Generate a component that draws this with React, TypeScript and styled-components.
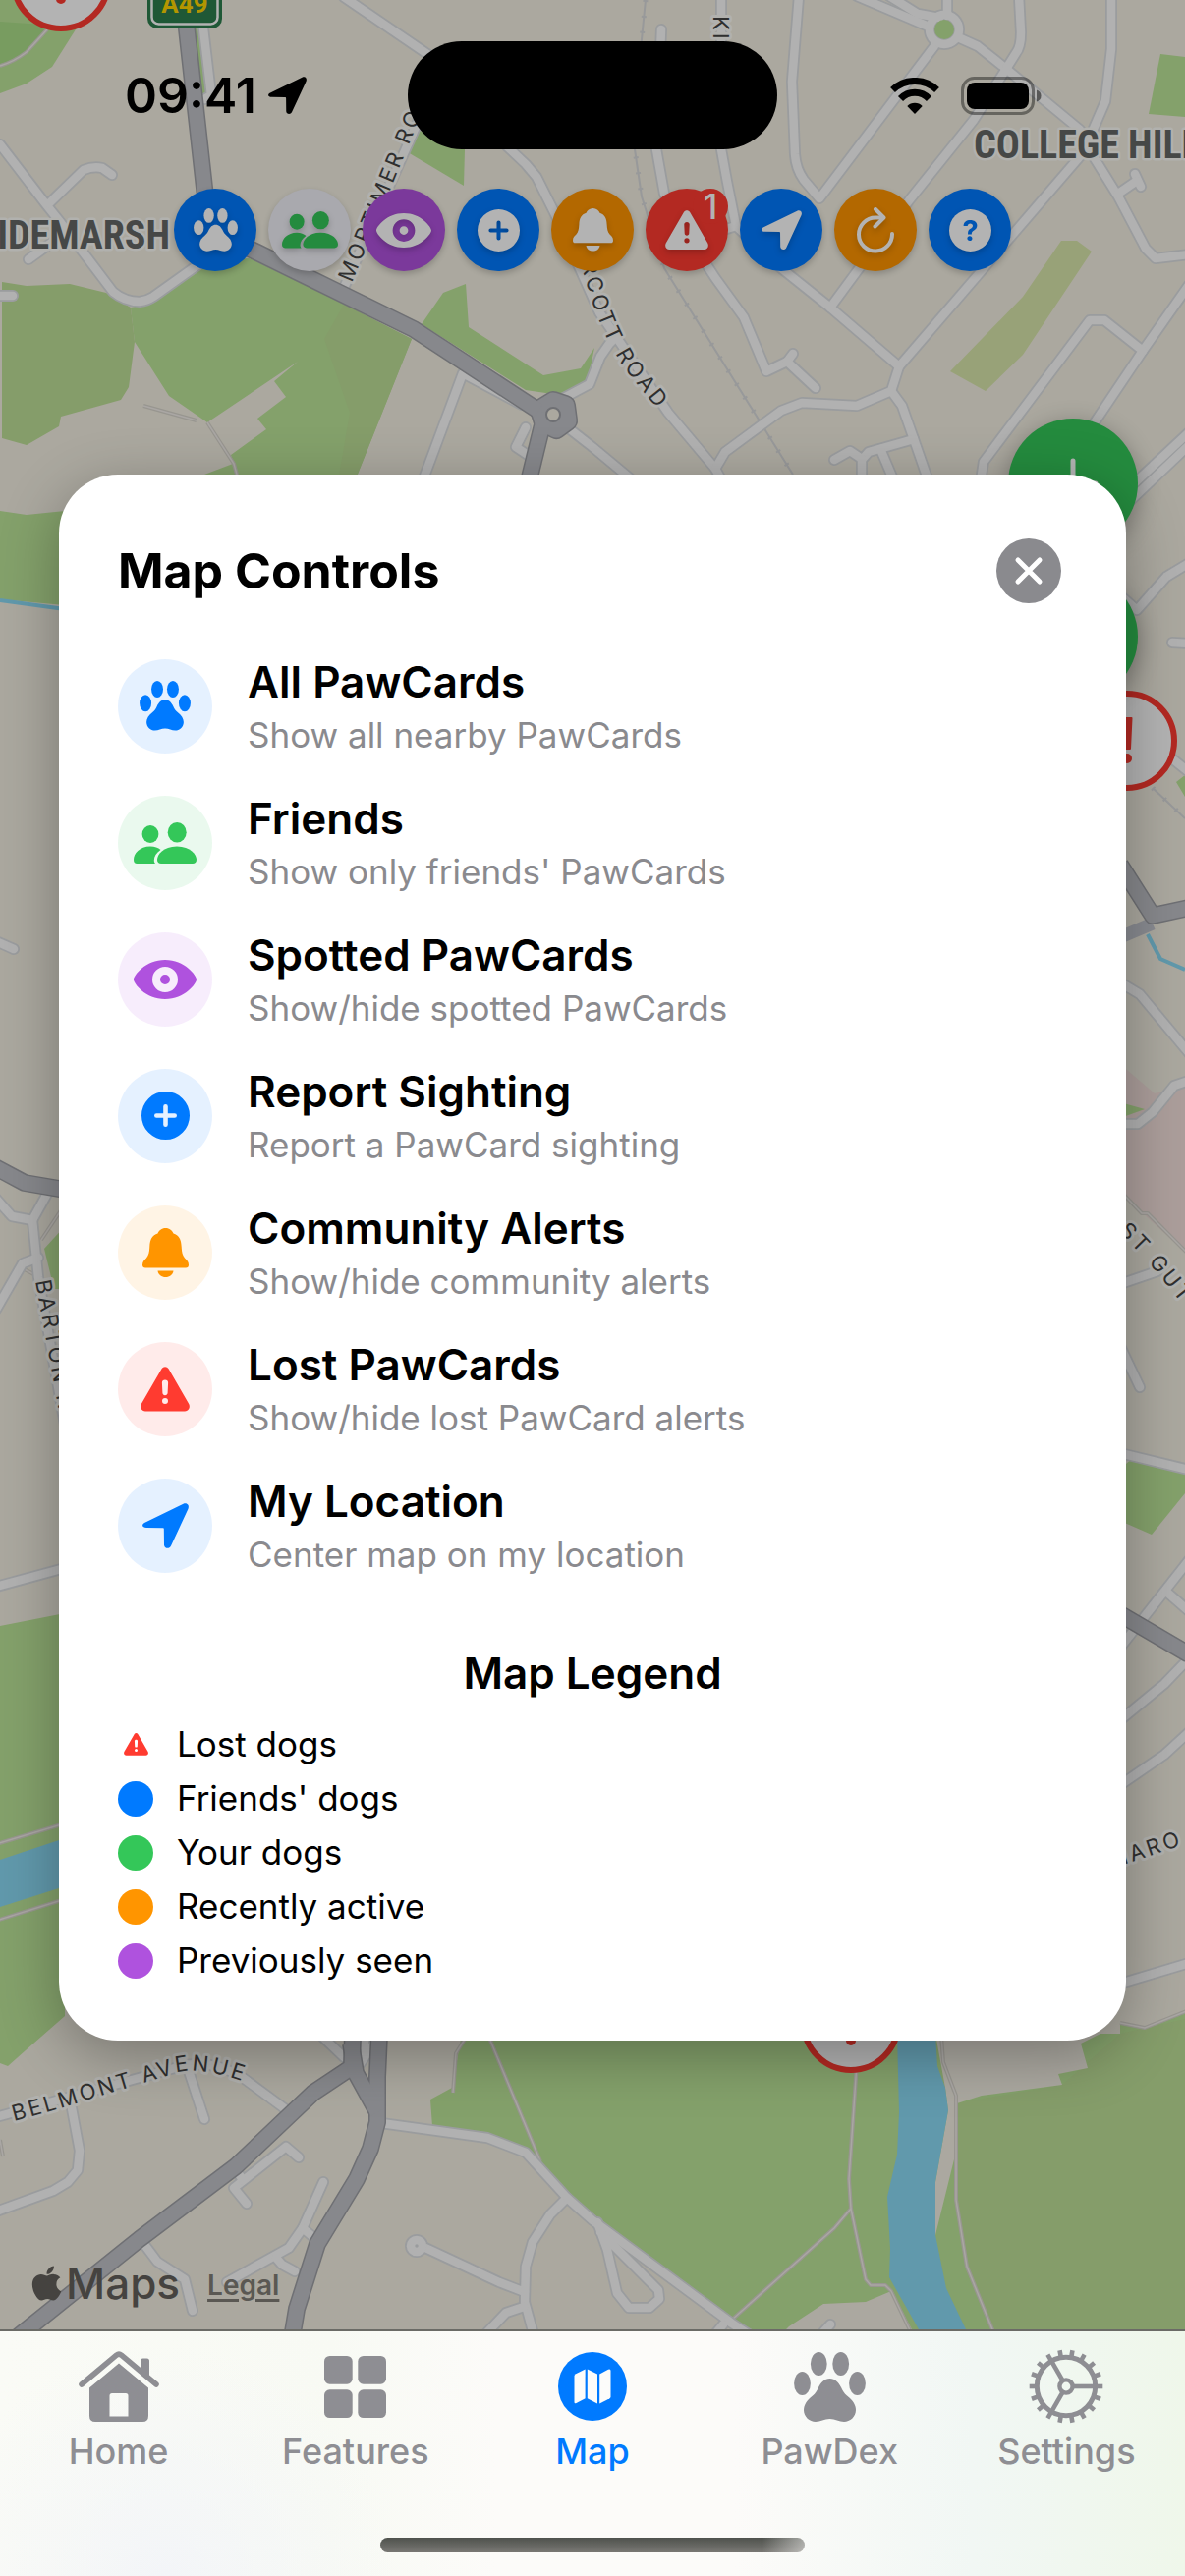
import React from "react";
import styled, { createGlobalStyle } from "styled-components";
import { FaApple } from "react-icons/fa";

const GlobalStyle = createGlobalStyle`
  *, *::before, *::after { box-sizing: border-box; }
  body { margin: 0; background: #aba89f; }
  h1, h2, h3, p, ul { margin: 0; padding: 0; }
  ul { list-style: none; }
  button { border: 0; padding: 0; font: inherit; cursor: pointer; }
`;

const color = {
  blue: "#007aff",
  green: "#34c759",
  purple: "#af52de",
  orange: "#ff9500",
  red: "#ff3b30",
  gray: "#8a8a8e",
  dimBlue: "#0055b3",
  dimGreen: "#248b3e",
  dimPurple: "#7b399b",
  dimOrange: "#b36800",
  dimRed: "#b32922",
  dimGray: "#a9a9ae",
  dimWhite: "#b3b3b3",
};

/* ---------- icons ---------- */

type IconName =
  | "paw" | "friends" | "eye" | "plus" | "bell" | "alert" | "arrow"
  | "refresh" | "help" | "home" | "grid" | "map" | "gear";

const iconBox: Record<IconName, [number, number]> = {
  paw: [73, 71],
  friends: [64, 42],
  eye: [64, 40],
  plus: [49, 49],
  bell: [47, 50],
  alert: [50, 46],
  arrow: [47, 46],
  refresh: [38, 46],
  help: [43, 43],
  home: [82, 73],
  grid: [63, 63],
  map: [70, 70],
  gear: [74, 74],
};

const iconArt: Record<IconName, React.ReactNode> = {
  paw: (
    <>
      <ellipse cx="25.3" cy="12" rx="8.4" ry="12" />
      <ellipse cx="47.7" cy="12" rx="8.4" ry="12" />
      <ellipse cx="8.5" cy="32" rx="8.4" ry="12" />
      <ellipse cx="64.5" cy="32" rx="8.4" ry="12" />
      <path d="M36.5 27C42 27 45.5 31 48 36C50 40 51 42 54 44.500C60 49 63 54 63 59C63 66 57 71 51 71C46 71 42 68 36.500 68C31 68 27 71 22 71C16 71 10 66 10 59C10 54 13 49 19 44.500C22 42 23 40 25 36C27.500 31 31 27 36.500 27Z" />
    </>
  ),
  friends: (
    <>
      <ellipse cx="17" cy="12" rx="8.4" ry="9" />
      <ellipse cx="44.200" cy="10.300" rx="9.500" ry="10.300" />
      <path d="M28 42C25.500 42 24 40.500 24 38C24 33 30 24.500 44 24.500C58 24.500 64 33 64 38C64 40.500 62.500 42 60 42Z" />
      <path d="M3.500 42C1 42 0 40.500 0 38C0 32 6 24.500 17 24.500C21.500 24.500 25 26 27.500 28C23 31 20.800 35 20.800 38.500C20.800 40 21.200 41 22 42Z" />
    </>
  ),
  eye: (
    <path
      fillRule="evenodd"
      d="M0 20C0 16 12 0 32 0S64 16 64 20S52 40 32 40S0 24 0 20ZM32 7A13 13 0 1 0 32 33A13 13 0 1 0 32 7ZM32 15A5 5 0 1 1 32 25A5 5 0 1 1 32 15Z"
    />
  ),
  plus: (
    <path
      fillRule="evenodd"
      d="M24.500 0A24.500 24.500 0 1 0 24.500 49A24.500 24.500 0 1 0 24.500 0ZM22.200 15.300A2.300 2.300 0 0 1 26.800 15.300V22.200H33.700A2.300 2.300 0 0 1 33.700 26.800H26.800V33.700A2.300 2.300 0 0 1 22.200 33.700V26.800H15.300A2.300 2.300 0 0 1 15.300 22.200H22.200Z"
    />
  ),
  bell: (
    <>
      <path d="M3 40.500C1 40.500 0 39.500 0 37.500C0 34 2 32.500 4 30.500C6.500 27.500 7 24 7.300 19C7.600 11 10 7.500 15.500 5.500C16.500 2.500 19.500 0 23.500 0S30.500 2.500 31.500 5.500C37 7.500 39.400 11 39.700 19C40 24 40.500 27.500 43 30.500C45 32.500 47 34 47 37.500C47 39.500 46 40.500 44 40.500Z" />
      <path d="M15.500 43.500H31.500C31 47.500 27.500 50 23.500 50S16 47.500 15.500 43.500Z" />
    </>
  ),
  alert: (
    <path
      fillRule="evenodd"
      d="M21.500 2.200C23 -.5 27 -.5 28.600 2.200L49.200 38C51 41.500 48.800 45.500 45 45.500H5C1.200 45.500 -1 41.500 .8 38ZM25 13.500C23.100 13.500 21.800 14.800 21.900 16.600L22.400 26.800C22.500 28.300 23.500 29.200 25 29.200S27.500 28.300 27.600 26.800L28.100 16.600C28.200 14.800 26.900 13.500 25 13.500ZM25 32A3 3 0 1 0 25 38A3 3 0 1 0 25 32Z"
    />
  ),
  arrow: (
    <path d="M2.500 19.800L41.500 .8C45 -.8 48 2 46.500 5.700L29 43.500C27.500 47 22.300 46.600 22 42.500L21.800 26.300C21.800 25.600 21.400 25.200 20.800 25.200L4 25C-.5 24.900 -1.200 21.600 2.500 19.800Z" />
  ),
  refresh: (
    <g fill="none" stroke="currentColor" strokeWidth="4" strokeLinecap="round" strokeLinejoin="round">
      <path d="M36 27A17 17 0 1 1 19 10.500H27" />
      <path d="M19 2L27.500 10.500L18.500 19.500" />
    </g>
  ),
  help: (
    <>
      <circle cx="21.500" cy="21.500" r="21.500" />
      <text x="21.500" y="32" textAnchor="middle" fontFamily="Inter, sans-serif" fontWeight="700" fontSize="29" fill={color.dimBlue}>?</text>
    </>
  ),
  home: (
    <>
      <path d="M3 34L38.500 4.200Q41 2.200 43.500 4.200L79 34" fill="none" stroke="currentColor" strokeWidth="5.600" strokeLinecap="round" />
      <path d="M63 21V10Q63 7.500 65.500 7.500H69.500Q72 7.500 72 10V29Z" />
      <path fillRule="evenodd" d="M41 12.500L71 37.500V66Q71 72 65 72H17Q11 72 11 66V37.500ZM34 43Q31.500 43 31.500 45.500V66.500H50.500V45.500Q50.500 43 48 43Z" />
    </>
  ),
  grid: (
    <>
      <rect width="28.700" height="28.700" rx="5.500" />
      <rect x="34.300" width="28.700" height="28.700" rx="5.500" />
      <rect y="34.300" width="28.700" height="28.700" rx="5.500" />
      <rect x="34.300" y="34.300" width="28.700" height="28.700" rx="5.500" />
    </>
  ),
  map: (
    <>
      <circle cx="35" cy="35" r="35" />
      <g fill="#fcfcfa">
        <path d="M16.500 24.500Q16.500 23 18 22.200L27.600 17.500V47.300L18.500 52Q16.500 52.700 16.500 51Z" />
        <path d="M29.800 17.500L40 22.600V52.500L29.800 47.300Z" />
        <path d="M42.200 22.600L51 17.800Q53.500 16.800 53.500 19V45.500Q53.500 46.600 52.500 47.200L42.200 52.500Z" />
      </g>
    </>
  ),
  gear: (
    <g fill="none" stroke="currentColor">
      <circle cx="37" cy="37" r="29.700" strokeWidth="5" />
      {Array.from({ length: 18 }, (_, i) => (
        <path key={i} d="M68 37H72" strokeWidth="4.600" strokeLinecap="square" transform={`rotate(${i * 20} 37 37)`} />
      ))}
      <circle cx="37" cy="37" r="6.600" strokeWidth="4.400" />
      {[0, 120, 240].map((a) => (
        <path key={a} d="M45 37H66" strokeWidth="4.600" transform={`rotate(${a} 37 37)`} />
      ))}
    </g>
  ),
};

const IconSvg = styled.svg<{ $w: number }>`
  display: block;
  width: ${(p) => p.$w}px;
  height: auto;
  fill: currentColor;
  overflow: visible;
`;

function Icon({ name, width }: { name: IconName; width: number }) {
  const [w, h] = iconBox[name];
  return (
    <IconSvg $w={width} viewBox={`0 0 ${w} ${h}`} aria-hidden="true">
      {iconArt[name]}
    </IconSvg>
  );
}

/* ---------- layout ---------- */

const Screen = styled.div`
  display: flex;
  flex-direction: column;
  min-height: 100vh;
  font-family: Inter, "Liberation Sans", sans-serif;
  color: #000;
`;

const MapArea = styled.main`
  position: relative;
  flex: 1;
  display: flex;
  flex-direction: column;
  overflow: hidden;
  border-bottom: 2px solid #6b6b66;
`;

const MapSvg = styled.svg`
  position: absolute;
  inset: 0;
  width: 100%;
  height: 100%;
`;

const StatusBar = styled.header`
  position: relative;
  display: grid;
  grid-template-columns: 1fr 376px 1fr;
  align-items: center;
  height: 192px;
  padding: 42px 0 40px;
`;

const StatusLeft = styled.div`
  display: flex;
  align-items: center;
  justify-content: center;
  gap: 12px;
  padding-left: 24px;
`;

const Clock = styled.span`
  font-size: 50px;
  font-weight: 600;
  line-height: 60px;
`;

const Island = styled.div`
  height: 110px;
  border-radius: 55px;
  background: #000;
`;

const StatusRight = styled.div`
  display: flex;
  align-items: center;
  justify-content: center;
  gap: 22px;
  padding-right: 32px;
`;

const Toolbar = styled.nav`
  position: relative;
  display: flex;
  justify-content: center;
  gap: 12px;
`;

const ToolButton = styled.button<{ $bg: string; $fg?: string }>`
  position: relative;
  display: grid;
  place-items: center;
  width: 84px;
  height: 84px;
  border-radius: 50%;
  background: ${(p) => p.$bg};
  color: ${(p) => p.$fg ?? color.dimWhite};
  box-shadow: 0 3px 6px rgba(0, 0, 0, 0.2);
  svg { filter: drop-shadow(0 3px 3px rgba(0, 0, 0, 0.2)); }
`;

const Badge = styled.span`
  position: absolute;
  top: 0;
  right: 0;
  width: 36px;
  height: 36px;
  border-radius: 50%;
  background: ${color.dimRed};
  font-size: 35px;
  font-weight: 500;
  line-height: 36px;
  text-align: center;
`;

const FloatingActions = styled.div`
  position: absolute;
  top: 426px;
  right: 48px;
  display: grid;
  gap: 24px;
`;

const FloatingButton = styled.button`
  display: grid;
  place-items: center;
  width: 132px;
  height: 132px;
  border-radius: 50%;
  background: ${color.dimGreen};
  color: ${color.dimWhite};
  box-shadow: 0 6px 24px rgba(0, 0, 0, 0.3);
`;

const Dialog = styled.section`
  position: relative;
  margin: 207px 60px auto;
  padding: 60px;
  border-radius: 60px;
  background: #fff;
  box-shadow: 0 15px 60px rgba(0, 0, 0, 0.3);
`;

const DialogHeader = styled.div`
  display: flex;
  align-items: center;
  justify-content: space-between;
  margin-bottom: 48px;
`;

const DialogTitle = styled.h1`
  font-size: 50px;
  font-weight: 700;
  line-height: 60px;
`;

const CloseButton = styled.button`
  display: grid;
  place-items: center;
  width: 78px;
  height: 76px;
  background: none;
`;

const ControlList = styled.ul`
  display: grid;
  gap: 36px;
`;

const ControlRow = styled.li`
  display: flex;
  align-items: center;
  gap: 36px;
  height: 103px;
`;

const ControlIcon = styled.span<{ $color: string }>`
  display: grid;
  place-items: center;
  width: 96px;
  height: 96px;
  border-radius: 50%;
  color: ${(p) => p.$color};
  background: ${(p) => p.$color}1a;
`;

const ControlText = styled.div`
  display: grid;
  gap: 6px;
`;

const ControlName = styled.h3`
  font-size: 44px;
  font-weight: 600;
  line-height: 54px;
`;

const ControlHint = styled.p`
  font-size: 35px;
  line-height: 43px;
  color: ${color.gray};
`;

const LegendTitle = styled.h2`
  margin: 72px 0 24px;
  font-size: 44px;
  font-weight: 600;
  line-height: 54px;
  text-align: center;
`;

const LegendList = styled.ul`
  display: grid;
  gap: 12px;
`;

const LegendRow = styled.li`
  display: flex;
  align-items: center;
  gap: 24px;
  font-size: 35px;
  line-height: 43px;
`;

const LegendMark = styled.span<{ $color: string; $dot: boolean }>`
  display: grid;
  place-items: center;
  width: 36px;
  height: 36px;
  border-radius: 50%;
  color: ${(p) => p.$color};
  background: ${(p) => (p.$dot ? p.$color : "transparent")};
`;

const MapFooter = styled.footer`
  position: relative;
  display: flex;
  align-items: flex-end;
  gap: 28px;
  padding: 0 32px 20px;
  color: #454340;
`;

const MapsBrand = styled.span`
  display: flex;
  align-items: center;
  gap: 4px;
  font-size: 44px;
  font-weight: 500;
  line-height: 54px;
`;

const AppleMark = styled(FaApple)`
  width: 31px;
  height: 40px;
`;

const LegalLink = styled.a`
  font-size: 28px;
  font-weight: 600;
  line-height: 50px;
  color: #5a5853;
  text-underline-offset: 4px;
  text-decoration-thickness: 3px;
`;

const TabBar = styled.nav`
  display: flex;
  flex-direction: column;
  align-items: center;
  height: 249px;
  background:
    radial-gradient(circle at 14% 100%, #f3f5f8, transparent 22%),
    linear-gradient(90deg, #fafbf6 0%, #f8faf4 28%, #fcfbf9 42%, #fcfbf9 62%, #f1f7f4 82%, #eff7ea 100%);
`;

const TabRow = styled.div`
  display: grid;
  grid-template-columns: repeat(5, 1fr);
  width: 100%;
  padding-top: 18px;
`;

const Tab = styled.button<{ $active?: boolean }>`
  display: grid;
  grid-template-rows: 76px 44px;
  gap: 6px;
  place-items: center;
  background: none;
  color: ${(p) => (p.$active ? color.blue : "#8e8e93")};
  font-size: 36px;
  font-weight: 500;
  line-height: 44px;
`;

const HomeIndicator = styled.div`
  width: 432px;
  height: 15px;
  margin: auto 0 24px;
  border-radius: 8px;
  background: linear-gradient(90deg, transparent 90%, rgba(252, 251, 249, 0.5)), linear-gradient(#4f524d, #797874);
`;

/* ---------- map drawing ---------- */

const streets = [
  "M0 147L46 207L62 227L115 297Q127 307 142 307Q150 306 156 302L205 267",
  "M50 207L85 173Q95 169 104 171L114 178",
  "M29 264L62 240L66 232",
  "M-5 301H13",
  "M207 29L215 97L208 101",
  "M350 -3L435 55L517 150L535 167L546 180L567 222L610 318L680 420L728 477L735 490",
  "M427 120L350 293",
  "M430 490L471 380L531 412",
  "M540 465L525 455L535 435",
  "M570 407L600 391L611 363L620 350L630 340",
  "M580 437L603 455L645 490",
  "M872 -4L945 27",
  "M905 -4L934 14L956 18",
  "M964 -4V16",
  "M975 38L995 47L1024 70L1099 132L1107 150L1138 200L1166 253L1176 263L1210 259",
  "M1037 -4L1039 33Q1039 48 1034 54L1024 70L991 122L926 203L845 313",
  "M1131 -4V50L1125 103L1109 140",
  "M951 47L834 202L818 183Q810 172 809 157L806 83L813 -4",
  "M1107 150L915 373L907 398L872 413L816 410L795 418L738 460L728 477",
  "M907 398L918 413L930 447L945 490",
  "M930 447L884 460L877 468V490",
  "M849 468L865 459L877 467",
  "M896 457L910 490",
  "M749 230L795 273L845 313L915 373",
  "M673 30L668 152L676 197L700 240L728 283L757 323L780 378L801 368L807 360",
  "M801 368L830 395",
  "M734 -4V152L740 185L749 230L730 236",
  "M1155 177L1161 190",
  "M1157 184L1138 197",
  "M1210 290L1163 357L1114 430L1080 480",
  "M1163 357L1124 326H1109L1001 470L998 490",
  "M1210 440L1060 580",
  "M1210 453L1150 510",
  "M1210 573L1187 587L1157 621L1140 606",
  "M1193 654L1210 655",
  "M1180 762L1210 786",
  "M1140 1000L1160 1012L1210 1072",
  "M1140 1144H1158L1173 1132L1195 1105L1210 1100",
  "M1140 1307L1178 1294",
  "M1140 1370L1160 1412",
  "M1140 1479L1210 1496",
  "M1210 1588L1140 1677",
  "M1187 1620L1210 1640",
  "M1140 1751L1185 1714L1210 1688",
  "M1140 1817L1185 1786L1210 1763",
  "M1140 2019L1210 1998",
  "M-4 958L14 966",
  "M-4 1220L12 1238L33 1242L48 1215",
  "M33 1242L39 1300L66 1450",
  "M-4 1333L23 1286L39 1280",
  "M-4 1615L66 1596",
  "M327 2072L350 2094",
  "M-4 2155L127 2119L185 2103Q215 2096 246 2114L292 2148",
  "M73 2146L81 2189L79 2209L69 2221L54 2230L-4 2251",
  "M192 2108L208 2157",
  "M304 2196L291 2185L238 2227L251 2243",
  "M238 2205L247 2219",
  "M329 2221L308 2268L294 2288L231 2323",
  "M308 2268L320 2278",
  "M281 2298L287 2305L300 2312",
  "M142 2278L160 2302L188 2320L196 2352",
  "M433 2288L508 2323L534 2333",
  "M577 2237L560 2254L542 2282L535 2307L534 2343L543 2376",
  "M533 2348L515 2354L494 2376",
  "M388 2161L496 2176L535 2191L577 2237L603 2260L745 2365L765 2378",
  "M608 2262L618 2290L628 2334L640 2349H661L671 2340L670 2331L611 2272",
  "M736 2366L726 2378",
  "M845 2366L836 2376",
  "M372 2072L367 2100L386 2072",
];

const mainRoads = [
  "M189 20L209 200L222 238L262 257L421 335L548 418",
  "M555 420L538 490",
  "M1140 880L1173 932L1210 924",
  "M1140 1643L1210 1684",
  "M-5 1188L25 1204L66 1211",
  "M359 2070L358 2104L319 2130L240 2205L142 2279L10 2385",
  "M386 2070L384 2114V2160L377 2187L363 2218L323 2284L302 2350L297 2380",
  "M357 2080L362 2110L384 2150",
];

const footpaths = [
  "M48 30L27 53Q14 63 0 67",
  "M146 413L200 428",
  "M211 430L238 472L243 490",
  "M1140 1212L1162 1235H1168L1210 1277",
  "M1140 2059L1165 2064L1210 2046",
  "M-4 1877L66 1856M-4 1955L66 1933",
  "M23 1291L40 1300M42 1262L62 1232",
  "M872 2100L864 2218L866 2248L881 2320L886 2326H901L907 2332L928 2376M866 2248L849 2268L745 2361",
  "M958 2072L960 2099L973 2133V2239L984 2307L1012 2376",
  "M497 2072L550 2200M474 2074L464 2090L461 2130",
  "M0 2178L3 2195",
];

const streetName = {
  fontFamily: "Inter, sans-serif",
  fontSize: 22,
  fill: "#2f2f2f",
  stroke: "#b1b1ae",
  strokeWidth: 6,
  strokeLinejoin: "round" as const,
  paintOrder: "stroke",
  letterSpacing: 3,
};

const districtName = {
  fontFamily: '"Liberation Sans Narrow", "Roboto Condensed", Roboto, sans-serif',
  fontSize: 40,
  fontWeight: 700,
  fill: "#464847",
  stroke: "#b1b1ae",
  strokeWidth: 5,
  strokeLinejoin: "round" as const,
  paintOrder: "stroke",
};

function Pin({ x, y }: { x: number; y: number }) {
  return (
    <g transform={`translate(${x} ${y})`}>
      <circle r="48" fill="#b3b3b3" stroke="#b32922" strokeWidth="6" />
      <path d="M-4.500 -23H4.500L3 8H-3Z" fill="#b32922" stroke="#b32922" strokeWidth="2" strokeLinejoin="round" />
      <circle cy="18" r="5" fill="#b32922" />
    </g>
  );
}

function CityMap() {
  return (
    <MapSvg viewBox="0 0 1206 2371" preserveAspectRatio="xMidYMin slice" role="img" aria-label="Map of Hereford">
      <defs>
        <path id="mortimer" d="M358 288L434 104" />
        <path id="arcott" d="M586 246Q598 302 618 345L634 373L672 420L690 442" />
        <path id="belmont" d="M14 2159Q60 2147 90 2137L183 2109Q208 2103 262 2124" />
        <path id="barton" d="M36 1304L68 1480" />
        <path id="guthlac" d="M1138 1254Q1170 1282 1220 1350" />
        <path id="harold" d="M1134 1901L1215 1874" />
        <path id="king" d="M726 16V80" />
      </defs>
      <rect width="1206" height="2371" fill="#aba89f" />

      <g fill="#84a16b">
        <path d="M0 0H90L77 30L53 68L27 85L0 95Z" />
        <path d="M133 313L156 308L200 273L219 265L254 263L335 302L419 345L361 490H190L208 483L237 472L235 463L271 437L262 426L291 404L279 388L303 368L211 430L172 403L137 348Z" />
        <path d="M474 289L477 333L553 382L591 375L605 354L598 388L569 402L535 397L429 330L451 298Z" />
        <path d="M427 133L473 152L472 189L415 155Z" />
        <path d="M198 29H205L211 97H204Z" />
        <path d="M1181 55L1206 58V119L1169 116Z" />
        <path d="M0 520L27 524L66 520V616L0 610Z" />
        <path d="M1197 796L1206 789V811Z" />
        <path d="M45 1271L66 1248V1312H55Z" />
        <path d="M0 1655L66 1642V2052L26 2087L8 2103L0 2100Z" />
        <path d="M1140 1495L1152 1485L1206 1500V1520L1172 1562L1140 1548Z" />
        <path d="M470 2070L460 2125L438 2137L440 2164L496 2176L535 2191L577 2232L745 2365L765 2371H1206V2047L1165 2064L1140 2059V2070Z" />
      </g>
      <g fill="#859d6a">
        <path d="M2 287L27 291L71 289L108 298L133 313L137 348L131 394L123 407L62 424L60 434L27 453L2 446Z" />
        <path d="M350 310L419 345L361 490H344L356 420L330 345Z" />
        <path d="M973 2141L1081 2122L1140 2070L1206 2055V2371H1011L984 2307L973 2239Z" />
      </g>
      <path d="M0 22L44 25L47 32L27 53L0 67Z" fill="#789c60" />
      <path d="M1080 245H1096L1111 256L1041 361L1003 398L967 378L1041 302Z" fill="#98a278" />
      <path d="M1140 1083L1175 1113L1206 1106V1274L1140 1214Z" fill="#ac9e9b" />
      <path d="M1140 1122L1165 1129L1140 1138Z" fill="#84a16b" />
      <g fill="#aba8a0">
        <path d="M952 2070L962 2125L965 2148L952 2221V2275L971 2198L974 2141L999 2133L1081 2122L1077 2111L1107 2105L1100 2080L1120 2070Z" />
        <path d="M800 2371L803 2368L838 2345L881 2343L907 2332L928 2371Z" />
      </g>
      <path d="M913 2070L915 2150L913 2193L903 2236L906 2289L905 2318L935 2371H983L963 2329L952 2275V2221L965 2148L962 2125L954 2103L952 2070Z" fill="#6199ac" />
      <path d="M0 1893L66 1871V1920L0 1941Z" fill="#6199ac" />
      <path d="M0 611L66 620M1168 951L1181 976L1206 987" fill="none" stroke="#6199ac" strokeWidth="4" />

      <g fill="none" strokeLinejoin="round">
        <g stroke="#989690" strokeWidth="4">{footpaths.map((d) => <path key={d} d={d} />)}</g>
        <g stroke="#aaa7a4" strokeWidth="1.500">{footpaths.map((d) => <path key={d} d={d} />)}</g>
        <g stroke="#98999a" strokeWidth="2">
          <path d="M657 0L647 100L646 152L653 200L676 273L807 483M1173 802L1206 833" />
          <path d="M657 0L647 100L646 152L653 200L676 273L807 483M1173 802L1206 833" strokeWidth="5" strokeDasharray="2 14" />
        </g>
        <g strokeLinecap="round">
          <g stroke="#9a9c9e" strokeWidth="12">
            {streets.map((d) => <path key={d} d={d} />)}
            <circle cx="961" cy="30" r="15" />
            <circle cx="424" cy="2286" r="6" />
          </g>
          <g stroke="#b1b1b1" strokeWidth="8.500">
            {streets.map((d) => <path key={d} d={d} />)}
            <circle cx="961" cy="30" r="15" />
            <circle cx="424" cy="2286" r="6" />
          </g>
        </g>
        <path d="M1140 954L1173 940" stroke="#898b91" strokeWidth="13" />
        <path d="M563 409L575 413L577 428L566 436L554 430L550 417Z" stroke="#6f7074" strokeWidth="22" />
        <g stroke="#6f7074" strokeWidth="18">{mainRoads.map((d) => <path key={d} d={d} />)}</g>
        <path d="M563 409L575 413L577 428L566 436L554 430L550 417Z" stroke="#87888c" strokeWidth="19" />
        <g stroke="#87888c" strokeWidth="15">{mainRoads.map((d) => <path key={d} d={d} />)}</g>
      </g>
      <circle cx="961" cy="30" r="10" fill="#84a16b" />
      <circle cx="563" cy="422" r="7" fill="#aba89f" stroke="#6f7074" strokeWidth="2" />

      <text {...streetName}><textPath href="#mortimer">MORTIMER RO</textPath></text>
      <text {...streetName}><textPath href="#arcott" startOffset="22">RCOTT ROAD</textPath></text>
      <text {...streetName}><textPath href="#belmont">BELMONT AVENUE</textPath></text>
      <text {...streetName}><textPath href="#barton">BARTON R</textPath></text>
      <text {...streetName}><textPath href="#guthlac">ST GUT</textPath></text>
      <text {...streetName}><textPath href="#harold">HARO</textPath></text>
      <text {...streetName}><textPath href="#king">KI</textPath></text>
      <text {...districtName} x="173" y="253" textAnchor="end">IDEMARSH</text>
      <text {...districtName} x="991" y="161">COLLEGE HILL</text>

      <g>
        <rect x="150" y="-40" width="76" height="69" rx="10" fill="#1f5836" />
        <rect x="154.500" y="-40" width="67" height="64.500" rx="7" fill="none" stroke="#b3b3b3" strokeWidth="2.500" />
        <text x="188" y="13" textAnchor="middle" fontFamily='"Liberation Sans Narrow", Roboto, sans-serif' fontWeight="700" fontSize="26" fill="#b39600">A49</text>
      </g>
      <Pin x={62} y={-19} />
      <Pin x={1147} y={754} />
      <Pin x={866} y={2059} />
    </MapSvg>
  );
}

/* ---------- content ---------- */

const tools: { name: IconName; label: string; width: number; bg: string; fg?: string; badge?: string }[] = [
  { name: "paw", label: "All PawCards", width: 45, bg: color.dimBlue },
  { name: "friends", label: "Friends", width: 57, bg: color.dimGray, fg: color.dimGreen },
  { name: "eye", label: "Spotted PawCards", width: 56, bg: color.dimPurple },
  { name: "plus", label: "Report Sighting", width: 43, bg: color.dimBlue },
  { name: "bell", label: "Community Alerts", width: 41, bg: color.dimOrange },
  { name: "alert", label: "Lost PawCards", width: 44, bg: color.dimRed, badge: "1" },
  { name: "arrow", label: "My Location", width: 41, bg: color.dimBlue },
  { name: "refresh", label: "Refresh", width: 38, bg: color.dimOrange },
  { name: "help", label: "Help", width: 43, bg: color.dimBlue },
];

const controls: { icon: IconName; width: number; tint: string; name: string; hint: string }[] = [
  { icon: "paw", width: 52, tint: color.blue, name: "All PawCards", hint: "Show all nearby PawCards" },
  { icon: "friends", width: 64, tint: color.green, name: "Friends", hint: "Show only friends' PawCards" },
  { icon: "eye", width: 64, tint: color.purple, name: "Spotted PawCards", hint: "Show/hide spotted PawCards" },
  { icon: "plus", width: 49, tint: color.blue, name: "Report Sighting", hint: "Report a PawCard sighting" },
  { icon: "bell", width: 47, tint: color.orange, name: "Community Alerts", hint: "Show/hide community alerts" },
  { icon: "alert", width: 50, tint: color.red, name: "Lost PawCards", hint: "Show/hide lost PawCard alerts" },
  { icon: "arrow", width: 47, tint: color.blue, name: "My Location", hint: "Center map on my location" },
];

const legend = [
  { label: "Lost dogs", tint: color.red, dot: false },
  { label: "Friends' dogs", tint: color.blue, dot: true },
  { label: "Your dogs", tint: color.green, dot: true },
  { label: "Recently active", tint: color.orange, dot: true },
  { label: "Previously seen", tint: color.purple, dot: true },
];

const tabs: { icon: IconName; width: number; label: string }[] = [
  { icon: "home", width: 82, label: "Home" },
  { icon: "grid", width: 63, label: "Features" },
  { icon: "map", width: 70, label: "Map" },
  { icon: "paw", width: 73, label: "PawDex" },
  { icon: "gear", width: 74, label: "Settings" },
];

export default function App() {
  return (
    <Screen>
      <GlobalStyle />
      <MapArea>
        <CityMap />
        <StatusBar>
          <StatusLeft>
            <Clock>09:41</Clock>
            <Icon name="arrow" width={39} />
          </StatusLeft>
          <Island />
          <StatusRight>
            <svg width="50" height="37" viewBox="0 0 50 37" aria-label="Wi-Fi">
              <g fill="none" stroke="#000" strokeWidth="7">
                <path d="M2.500 12.500A32.500 32.500 0 0 1 47.500 12.500" />
                <path d="M10.500 21.500A20 20 0 0 1 39.500 21.500" />
              </g>
              <path d="M25 37L17.300 29A11 11 0 0 1 32.700 29Z" />
            </svg>
            <svg width="82" height="39" viewBox="0 0 82 39" aria-label="Battery full">
              <rect x="1.500" y="1.500" width="72" height="36" rx="12" fill="none" stroke="#000" strokeOpacity=".4" strokeWidth="3" />
              <rect x="6" y="6" width="63" height="27" rx="8" />
              <path d="M77 13.500Q81.500 15 81.500 19.500T77 25.500Z" fillOpacity=".5" />
            </svg>
          </StatusRight>
        </StatusBar>

        <Toolbar aria-label="Map tools">
          {tools.map((t) => (
            <ToolButton key={t.name} $bg={t.bg} $fg={t.fg} aria-label={t.label}>
              {t.badge && <Badge>{t.badge}</Badge>}
              <Icon name={t.name} width={t.width} />
            </ToolButton>
          ))}
        </Toolbar>

        <FloatingActions>
          {["Add dog", "Add sighting"].map((label) => (
            <FloatingButton key={label} aria-label={label}>
              <svg width="56" height="56" viewBox="0 0 56 56" aria-hidden="true">
                <path d="M28 5V51M5 28H51" stroke="currentColor" strokeWidth="5" strokeLinecap="round" />
              </svg>
            </FloatingButton>
          ))}
        </FloatingActions>

        <Dialog role="dialog" aria-labelledby="dialog-title">
          <DialogHeader>
            <DialogTitle id="dialog-title">Map Controls</DialogTitle>
            <CloseButton aria-label="Close">
              <svg width="66" height="66" viewBox="0 0 66 66" aria-hidden="true">
                <circle cx="33" cy="33" r="33" fill={color.gray} />
                <path d="M22 22L44 44M44 22L22 44" stroke="#fff" strokeWidth="5" strokeLinecap="round" />
              </svg>
            </CloseButton>
          </DialogHeader>

          <ControlList>
            {controls.map((c) => (
              <ControlRow key={c.name}>
                <ControlIcon $color={c.tint}>
                  <Icon name={c.icon} width={c.width} />
                </ControlIcon>
                <ControlText>
                  <ControlName>{c.name}</ControlName>
                  <ControlHint>{c.hint}</ControlHint>
                </ControlText>
              </ControlRow>
            ))}
          </ControlList>

          <LegendTitle>Map Legend</LegendTitle>
          <LegendList>
            {legend.map((l) => (
              <LegendRow key={l.label}>
                <LegendMark $color={l.tint} $dot={l.dot}>
                  {!l.dot && <Icon name="alert" width={25} />}
                </LegendMark>
                {l.label}
              </LegendRow>
            ))}
          </LegendList>
        </Dialog>

        <MapFooter>
          <MapsBrand>
            <AppleMark aria-label="Apple" />
            Maps
          </MapsBrand>
          <LegalLink href="#legal">Legal</LegalLink>
        </MapFooter>
      </MapArea>

      <TabBar aria-label="Main">
        <TabRow>
          {tabs.map((t) => (
            <Tab key={t.label} $active={t.label === "Map"} aria-current={t.label === "Map" ? "page" : undefined}>
              <Icon name={t.icon} width={t.width} />
              {t.label}
            </Tab>
          ))}
        </TabRow>
        <HomeIndicator />
      </TabBar>
    </Screen>
  );
}
